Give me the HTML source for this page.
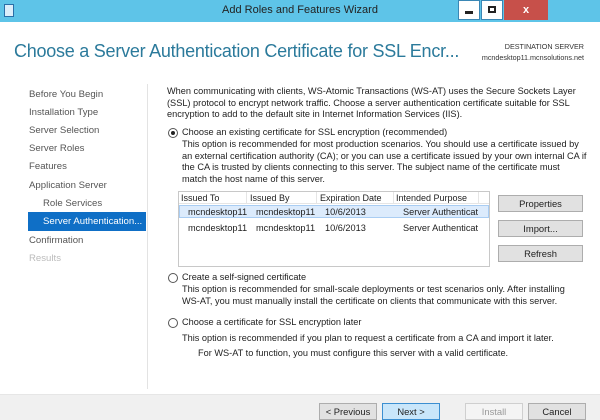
<!DOCTYPE html>
<html><head><meta charset="utf-8"><style>
*{margin:0;padding:0;box-sizing:border-box}
body{width:600px;height:420px;overflow:hidden;background:#fff;font-family:"Liberation Sans",sans-serif;font-size:9.2px;color:#1e1e1e;position:relative}
.a{position:absolute;white-space:nowrap}
.tb{position:absolute;left:0;top:0;width:600px;height:22px;background:#5ec4e8}
.nav{color:#555;font-size:9.6px}
.btn{position:absolute;height:17px;border:1px solid #adadad;background:#e1e1e1;text-align:center;line-height:15px;font-size:9.4px;color:#222}
.radio{position:absolute;width:10px;height:10px;border:1px solid #555;border-radius:50%;background:#fff}
</style></head><body>
<div class="tb"></div>
<div class="a" style="left:4px;top:4px;width:10px;height:13px;border:1px solid #2a6fa8;background:#dceefa"></div>
<div class="a" style="left:0;top:4px;width:600px;text-align:center;font-size:11px;color:#222">Add Roles and Features Wizard</div>
<div class="a" style="left:458px;top:0;width:22px;height:20px;background:#fff;border:1px solid #3a87b5"></div>
<div class="a" style="left:465px;top:11px;width:8px;height:3px;background:#222"></div>
<div class="a" style="left:481px;top:0;width:22px;height:20px;background:#fff;border:1px solid #3a87b5"></div>
<div class="a" style="left:488px;top:6px;width:8px;height:7px;border:2px solid #222"></div>
<div class="a" style="left:504px;top:0;width:44px;height:20px;background:#c7504a;color:#fff;font-weight:bold;text-align:center;line-height:20px;font-size:11px">x</div>

<div class="a" style="left:14px;top:41px;font-size:18px;letter-spacing:-0.25px;color:#2b7a9b">Choose a Server Authentication Certificate for SSL Encr...</div>
<div class="a" style="left:466px;top:41px;width:118px;text-align:right;font-size:7.2px;color:#333;line-height:11px">DESTINATION SERVER<br>mcndesktop11.mcnsolutions.net</div>

<div class="a nav" style="left:29px;top:89px">Before You Begin</div>
<div class="a nav" style="left:29px;top:107px">Installation Type</div>
<div class="a nav" style="left:29px;top:125px">Server Selection</div>
<div class="a nav" style="left:29px;top:143px">Server Roles</div>
<div class="a nav" style="left:29px;top:161px">Features</div>
<div class="a nav" style="left:29px;top:180px">Application Server</div>
<div class="a nav" style="left:43px;top:198px">Role Services</div>
<div class="a" style="left:28px;top:212px;width:118px;height:19px;background:#0f6fc6"></div>
<div class="a nav" style="left:43px;top:216px;color:#fff">Server Authentication...</div>
<div class="a nav" style="left:29px;top:235px">Confirmation</div>
<div class="a nav" style="left:29px;top:253px;color:#bbb">Results</div>
<div class="a" style="left:147px;top:84px;width:1px;height:305px;background:#e3e3e3"></div>

<div class="a" style="left:167px;top:86px;line-height:11.6px">When communicating with clients, WS-Atomic Transactions (WS-AT) uses the Secure Sockets Layer<br>(SSL) protocol to encrypt network traffic. Choose a server authentication certificate suitable for SSL<br>encryption to add to the default site in Internet Information Services (IIS).</div>
<div class="radio" style="left:168px;top:128px"></div><div class="a" style="left:171px;top:131px;width:4px;height:4px;border-radius:50%;background:#222"></div>
<div class="a" style="left:182px;top:127px">Choose an existing certificate for SSL encryption (recommended)</div>
<div class="a" style="left:182px;top:139px;line-height:11.6px">This option is recommended for most production scenarios. You should use a certificate issued by<br>an external certification authority (CA); or you can use a certificate issued by your own internal CA if<br>the CA is trusted by clients connecting to this server. The subject name of the certificate must<br>match the host name of this server.</div>

<div class="a" style="left:178px;top:191px;width:312px;height:76px;border:1px solid #c8c8c8;background:#fff"></div>
<div class="a" style="left:179px;top:192px;width:310px;height:12px;border-bottom:1px solid #e5e5e5"></div>
<div class="a" style="left:246px;top:192px;width:1px;height:12px;background:#e5e5e5"></div>
<div class="a" style="left:316px;top:192px;width:1px;height:12px;background:#e5e5e5"></div>
<div class="a" style="left:393px;top:192px;width:1px;height:12px;background:#e5e5e5"></div>
<div class="a" style="left:478px;top:192px;width:1px;height:12px;background:#e5e5e5"></div>
<div class="a" style="left:181px;top:193px;font-size:9px">Issued To</div>
<div class="a" style="left:250px;top:193px;font-size:9px">Issued By</div>
<div class="a" style="left:320px;top:193px;font-size:9px">Expiration Date</div>
<div class="a" style="left:396px;top:193px;font-size:9px">Intended Purpose</div>
<div class="a" style="left:179px;top:205px;width:310px;height:13px;background:#dcebfc;border:1px solid #a9cdf3"></div>
<div class="a" style="left:188px;top:207px">mcndesktop11</div><div class="a" style="left:256px;top:207px">mcndesktop11</div><div class="a" style="left:325px;top:207px">10/6/2013</div><div class="a" style="left:403px;top:207px">Server Authenticat</div>
<div class="a" style="left:188px;top:223px">mcndesktop11</div><div class="a" style="left:256px;top:223px">mcndesktop11</div><div class="a" style="left:325px;top:223px">10/6/2013</div><div class="a" style="left:403px;top:223px">Server Authenticat</div>

<div class="btn" style="left:498px;top:195px;width:85px">Properties</div>
<div class="btn" style="left:498px;top:220px;width:85px">Import...</div>
<div class="btn" style="left:498px;top:245px;width:85px">Refresh</div>

<div class="radio" style="left:168px;top:273px"></div>
<div class="a" style="left:182px;top:272px">Create a self-signed certificate</div>
<div class="a" style="left:182px;top:284px;line-height:11.6px">This option is recommended for small-scale deployments or test scenarios only. After installing<br>WS-AT, you must manually install the certificate on clients that communicate with this server.</div>
<div class="radio" style="left:168px;top:318px"></div>
<div class="a" style="left:182px;top:317px">Choose a certificate for SSL encryption later</div>
<div class="a" style="left:182px;top:333px">This option is recommended if you plan to request a certificate from a CA and import it later.</div>
<div class="a" style="left:198px;top:348px">For WS-AT to function, you must configure this server with a valid certificate.</div>

<div class="a" style="left:0;top:394px;width:600px;height:26px;background:#f0f0f0;border-top:1px solid #e6e6e6"></div>
<div class="btn" style="left:319px;top:403px;width:58px">&lt; Previous</div>
<div class="btn" style="left:382px;top:403px;width:58px;background:#c9e6fa;border-color:#3c8fd1">Next &gt;</div>
<div class="btn" style="left:465px;top:403px;width:58px;background:#f4f4f4;border-color:#cfcfcf;color:#999">Install</div>
<div class="btn" style="left:528px;top:403px;width:58px">Cancel</div>
</body></html>
